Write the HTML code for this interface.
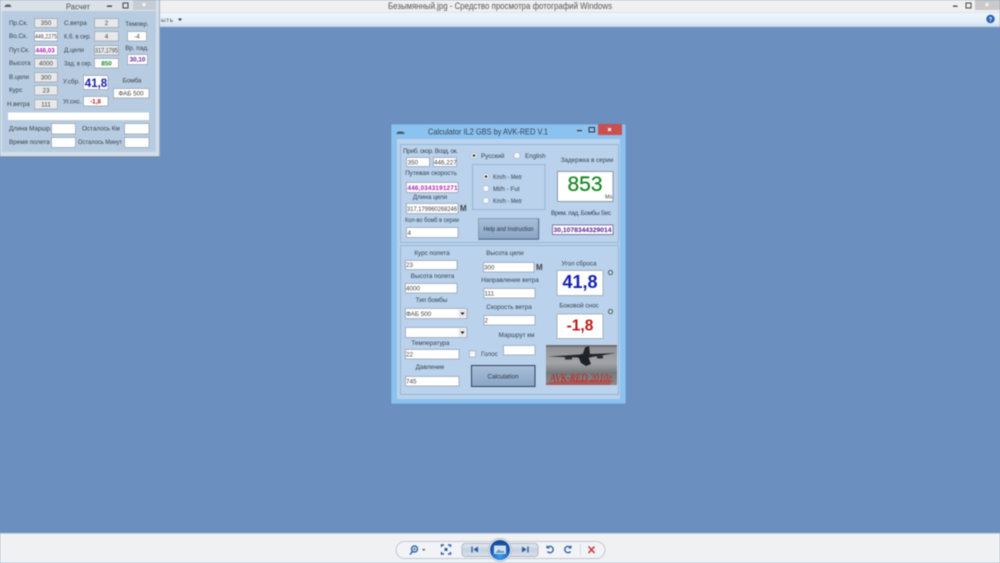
<!DOCTYPE html>
<html><head><meta charset="utf-8"><title>Расчет</title>
<style>
html,body{margin:0;padding:0;width:1000px;height:563px;overflow:hidden;background:#6b90bf}
svg{display:block;filter:blur(.4px)}
text{font-family:"Liberation Sans","Noto Sans CJK SC",sans-serif;font-size:6.3px;fill:#36424e}
.c{text-anchor:middle}
.box{fill:#fff;stroke:#8f9baa;stroke-width:.7}
.gray{fill:#e6e8ea;stroke:#98a0aa;stroke-width:.7}
.v{font-size:6.3px;fill:#444}
.ic{fill:none;stroke:#2f63a8;stroke-width:1.4}
.r{fill:#f6f8fb;stroke:#9aa6b4;stroke-width:.5}
</style></head><body>
<svg width="1000" height="563" viewBox="0 0 1000 563" xmlns="http://www.w3.org/2000/svg">
<defs>
<linearGradient id="tb" x1="0" y1="0" x2="0" y2="1"><stop offset="0" stop-color="#f0f6fc"/><stop offset=".65" stop-color="#e2edf8"/><stop offset="1" stop-color="#cfdeee"/></linearGradient>
<linearGradient id="bt" x1="0" y1="0" x2="0" y2="1"><stop offset="0" stop-color="#e6ebf1"/><stop offset=".5" stop-color="#c6d1df"/><stop offset="1" stop-color="#dde3ea"/></linearGradient>
<linearGradient id="btn" x1="0" y1="0" x2="0" y2="1"><stop offset="0" stop-color="#a9bfd8"/><stop offset="1" stop-color="#89a5c6"/></linearGradient>
<radialGradient id="ctr" cx=".5" cy=".8" r=".75"><stop offset="0" stop-color="#3fa0ee"/><stop offset=".6" stop-color="#1a5fb8"/><stop offset="1" stop-color="#17489a"/></radialGradient>
<linearGradient id="sky" x1="0" y1="0" x2="0" y2="1"><stop offset="0" stop-color="#8f8f92"/><stop offset=".45" stop-color="#a4a5a8"/><stop offset=".7" stop-color="#75787b"/><stop offset="1" stop-color="#8c8a8a"/></linearGradient>
</defs>

<rect width="1000" height="563" fill="#6b90bf"/>
<rect x="0" y="0" width="1000" height="12" fill="#f0f0f0"/>
<rect x="0" y="12" width="1000" height="15" fill="url(#tb)"/>
<rect x="0" y="12" width="1000" height=".7" fill="#d5dce4"/>
<rect x="0" y="26.3" width="1000" height=".8" fill="#b8cbe0"/>
<text x="388" y="9" textLength="224" lengthAdjust="spacingAndGlyphs" style="font-size:9px;fill:#555">Безымянный.jpg - Средство просмотра фотографий Windows</text>
<text x="161" y="22" textLength="12" style="font-size:6.5px;fill:#456">ыть</text>
<path d="M178 18.5h4l-2 2.5z" fill="#334"/>
<rect x="975" y="0" width="25" height="10" fill="#c9c9c9"/>
<path d="M985.5 3l3 3m0-3l-3 3" stroke="#fff" stroke-width="1"/>
<rect x="953" y="5.5" width="4.5" height="1.3" fill="#444"/>
<rect x="966" y="3" width="5" height="5" fill="none" stroke="#444" stroke-width="1"/>
<circle cx="990.5" cy="19" r="4.2" fill="#2a62b0"/><text x="990.5" y="21.5" class="c" style="font-size:6px;font-weight:bold;fill:#fff">?</text>

<!-- bottom bar -->
<rect x="0" y="533" width="1000" height="30" fill="#f0f1f3"/>
<rect x="0" y="533" width="1000" height="1" fill="#cfd6de"/>
<rect x="396" y="541.5" width="209" height="17" rx="8.5" fill="#f1f3f6" stroke="#b4bdc9" stroke-width=".8"/>
<circle cx="414.5" cy="549" r="3" class="ic"/><path d="M412.5 551.5l-2.5 3" class="ic"/><path d="M413 549h3M414.5 547.5v3" stroke="#2f63a8" stroke-width=".7"/>
<path d="M422 549h3.5l-1.75 2z" fill="#556"/>
<path d="M441.5 547v-2h2.5M448 545h2.5v2M441.5 552v2h2.5M448 554h2.5v-2" class="ic" stroke-width="1.1"/>
<rect x="444.5" y="548" width="3" height="3" fill="#2f63a8"/>
<rect x="462" y="543.5" width="76" height="13" rx="3" fill="url(#bt)" stroke="#9aa8ba" stroke-width=".7"/>
<path d="M472 546.5v6" stroke="#2b5da3" stroke-width="1.3"/><path d="M478 546.5v6l-4.5-3z" fill="#2b5da3"/>
<path d="M528 546.5v6" stroke="#2b5da3" stroke-width="1.3"/><path d="M522 546.5v6l4.5-3z" fill="#2b5da3"/>
<circle cx="500" cy="550" r="11.5" fill="#e4ebf3" stroke="#aab6c4" stroke-width=".7"/>
<circle cx="500" cy="550" r="10" fill="url(#ctr)"/>
<rect x="494.5" y="546" width="11" height="7.5" fill="#cfe0ef" stroke="#eaf2fa" stroke-width=".8"/>
<path d="M495 553l4-3.5 2.500 2 1.500-1 2 2.500z" fill="#6d96b8"/>
<path d="M548 547a3.2 3.2 0 1 1-.5 4.5" class="ic"/><path d="M546.5 545v3.5h3.500z" fill="#2f63a8"/>
<path d="M570 547a3.2 3.2 0 1 0 .5 4.5" class="ic"/><path d="M571.5 545v3.5h-3.500z" fill="#2f63a8"/>
<rect x="580" y="544" width=".7" height="12" fill="#cfd5dc"/>
<path d="M588.5 546.5l6 6.5m0-6.5l-6 6.5" stroke="#c9363a" stroke-width="1.5"/>

<!-- Left window -->
<rect x="0" y="0" width="160" height="157" fill="#d4dee9"/>
<rect x="0" y="0" width="160" height="11" fill="#dbe1e8"/>
<rect x="159" y="0" width="1" height="157" fill="#9fb2c8"/>
<rect x="0" y="156.3" width="160" height="1" fill="#6f87a4"/>
<rect x="2" y="11" width="154" height="141" fill="#b8cce1"/>
<path d="M4 7h7.5l-1.5-2.5H6z" fill="#5a6470"/>
<text x="66" y="9.500" textLength="24" lengthAdjust="spacingAndGlyphs" style="font-size:8.5px;fill:#4a5058">Расчет</text>
<rect x="107" y="5.5" width="5" height="1.3" fill="#333"/>
<rect x="123" y="3" width="5" height="5" fill="none" stroke="#444" stroke-width="1"/>
<rect x="133" y="0" width="23" height="10" fill="#c6ccd3"/>
<path d="M142.5 3l3 3m0-3l-3 3" stroke="#fff" stroke-width="1"/>

<text x="9" y="25">Пр.Ск.</text><text x="9" y="38">Во.Ск.</text><text x="9" y="52">Пут.Ск.</text><text x="9" y="65">Высота</text><text x="9" y="79">В.цели</text><text x="9" y="92">Курс</text><text x="7" y="106">Н.ветра</text>
<rect x="34.5" y="18.5" width="23" height="9" class="gray"/><text x="46" y="25.2" class="c v">350</text>
<rect x="34.5" y="31.5" width="23" height="9.5" class="box"/><text x="35" y="38.5" class="v" textLength="22" lengthAdjust="spacingAndGlyphs">446,2275</text>
<rect x="34.5" y="45.5" width="23" height="9.5" class="box"/><text x="35.5" y="52.5" style="font-weight:bold;fill:#b01fb0">446,03</text>
<rect x="34.5" y="58.5" width="23" height="9.5" class="gray"/><text x="46" y="65.5" class="c v">4000</text>
<rect x="34.5" y="72.5" width="23" height="9.5" class="gray"/><text x="46" y="79.5" class="c v">300</text>
<rect x="34.5" y="85.5" width="23" height="9.5" class="gray"/><text x="46" y="92.5" class="c v">23</text>
<rect x="34.5" y="99.5" width="23" height="9.5" class="gray"/><text x="46" y="106.5" class="c v">111</text>

<text x="64" y="25">С.ветра</text><text x="64" y="38.5" textLength="27" lengthAdjust="spacingAndGlyphs">К.б. в сер.</text><text x="64" y="52">Д.цели</text><text x="64" y="65.5" textLength="28" lengthAdjust="spacingAndGlyphs">Зад. в сер.</text>
<rect x="94.5" y="18.5" width="24" height="9" class="gray"/><text x="106.5" y="25.2" class="c v">2</text>
<rect x="94.5" y="31.5" width="24" height="9.5" class="gray"/><text x="106.5" y="38.5" class="c v">4</text>
<rect x="94.5" y="45.5" width="24" height="9.5" class="gray"/><text x="95" y="52.5" class="v" textLength="23" lengthAdjust="spacingAndGlyphs">317,1795</text>
<rect x="94.5" y="58.5" width="24" height="9.5" class="box"/><text x="106.5" y="65.5" class="c" style="font-weight:bold;fill:#1d8a2a">850</text>

<text x="137" y="26" class="c">Темпер.</text>
<rect x="127.5" y="31.5" width="19" height="9.5" class="box"/><text x="137" y="38.5" class="c v">-4</text>
<text x="137" y="50" class="c">Вр. пад.</text>
<rect x="127.5" y="54.5" width="20" height="10" class="box"/><text x="137.5" y="61.5" class="c" style="font-weight:bold;fill:#6a1f9e">30,10</text>

<text x="63" y="83.5">У.сбр.</text>
<rect x="83.5" y="75.5" width="24.5" height="14" class="box"/><text x="96" y="87" class="c" style="font-size:11.5px;font-weight:bold;fill:#1b22a8">41,8</text>
<text x="132" y="82.5" class="c">Бомба</text>
<rect x="113.5" y="88.5" width="35.5" height="9.5" class="box"/><text x="131" y="95.5" class="c v">ФАБ 500</text>
<text x="63" y="103.5">Уг.снс.</text>
<rect x="83.5" y="96.5" width="24.5" height="9.5" class="box"/><text x="95.5" y="103.5" class="c" style="font-weight:bold;fill:#b81c1c">-1,8</text>

<rect x="8" y="112.5" width="141" height="7.5" fill="#fff"/>
<text x="9" y="130.5">Длина Маршр.</text><text x="82" y="130.5">Осталось Км</text>
<text x="9" y="144">Время полета</text><text x="78" y="144" textLength="44" lengthAdjust="spacingAndGlyphs">Осталось Минут</text>
<rect x="51.5" y="123.5" width="24" height="10.5" class="box"/>
<rect x="124.5" y="123.5" width="24.5" height="10.5" class="box"/>
<rect x="51.5" y="137.5" width="24" height="10" class="box"/>
<rect x="124.5" y="137.5" width="24.5" height="10" class="box"/>

<!-- Calculator window -->
<rect x="391" y="124" width="235" height="280" fill="#8cc2f0" stroke="#5f8db8" stroke-width=".6"/>
<rect x="397" y="139" width="223" height="260" fill="#bad2ec"/>
<path d="M396 134h9l-2-2.500h-5z" fill="#4e5a66"/>
<text x="428" y="134.5" textLength="120" lengthAdjust="spacingAndGlyphs" style="font-size:8.3px;fill:#33404e">Calculator IL2 GBS by AVK-RED V.1</text>
<rect x="577" y="130" width="5" height="1.2" fill="#333"/>
<rect x="589" y="127.5" width="5.5" height="4.5" fill="none" stroke="#333" stroke-width="1"/>
<rect x="598" y="124" width="24" height="11" fill="#c9504f"/>
<path d="M608 128l3 3m0-3l-3 3" stroke="#fff" stroke-width="1.1"/>

<rect x="400.5" y="144.5" width="218" height="98" fill="#bad2ec" stroke="#8fb0cf" stroke-width=".8"/>
<rect x="400.5" y="245.5" width="218" height="149" fill="#bad2ec" stroke="#8fb0cf" stroke-width=".8"/>

<text x="403" y="153" textLength="55">Приб. скор. Возд. ок.</text>
<rect x="406.5" y="157.5" width="23" height="9" class="box"/><text x="407.5" y="164.5" class="v">350</text>
<rect x="433.5" y="157.5" width="23" height="9" class="box"/><text x="434" y="164.5" class="v">446,227</text>
<text x="431" y="175" class="c">Путевая скорость</text>
<rect x="406.5" y="182.5" width="51.5" height="10" class="box"/><text x="407.5" y="189.8" textLength="50" style="font-weight:bold;fill:#b01fb0">446,0343191271</text>
<text x="430" y="199" class="c">Длина цели</text>
<rect x="406.5" y="203.5" width="51.5" height="10" class="box"/><text x="407" y="210.8" textLength="50" lengthAdjust="spacingAndGlyphs" class="v">317,179960268246</text>
<text x="460" y="211" style="font-size:8px;font-weight:bold;fill:#444">M</text>
<text x="405" y="222" textLength="54" lengthAdjust="spacingAndGlyphs">Кол-во бомб в серии</text>
<rect x="406.5" y="227.5" width="51.5" height="10" class="box"/><text x="407.5" y="235" class="v">4</text>

<circle cx="474" cy="155.5" r="3" class="r"/><circle cx="474" cy="155.5" r="1.3" fill="#333"/>
<text x="481" y="158">Русский</text>
<circle cx="517" cy="155.5" r="3" class="r"/>
<text x="525" y="158">English</text>

<rect x="472.5" y="164.5" width="72.5" height="45" fill="none" stroke="#8fb0cf" stroke-width=".8"/>
<circle cx="486" cy="176.5" r="3" class="r"/><circle cx="486" cy="176.5" r="1.3" fill="#333"/>
<text x="493" y="179" textLength="29" lengthAdjust="spacingAndGlyphs">Km/h - Metr</text>
<circle cx="486" cy="188.5" r="3" class="r"/>
<text x="493" y="191">Ml/h - Fut</text>
<circle cx="486" cy="200.5" r="3" class="r"/>
<text x="493" y="203" textLength="29" lengthAdjust="spacingAndGlyphs">Km/h - Metr</text>

<text x="587" y="162" class="c">Задержка в серии</text>
<rect x="557.5" y="171.5" width="55.5" height="30" class="box" style="stroke:#6f7782"/>
<text x="585" y="191" class="c" style="font-size:21px;fill:#14871f;stroke:#14871f;stroke-width:.2">853</text>
<text x="605" y="198.5" style="font-size:5.5px">Ms</text>
<text x="551" y="215" textLength="60">Врем. пад. Бомбы Sec</text>
<rect x="552.5" y="225" width="60.5" height="9.5" class="box" style="stroke:#5a4a8a"/>
<text x="553.5" y="232" textLength="58" lengthAdjust="spacingAndGlyphs" style="font-weight:bold;fill:#4f1f8e">30,1078344329014</text>

<rect x="478.5" y="218.5" width="60" height="21" fill="url(#btn)" stroke="#7a8ea6" stroke-width=".7"/>
<rect x="538" y="218.5" width="1.2" height="21" fill="#5d7391"/><rect x="478.5" y="238.5" width="60.5" height="1.2" fill="#5d7391"/>
<text x="508.5" y="231" class="c" textLength="50" lengthAdjust="spacingAndGlyphs" style="fill:#2b3642">Help and Instruction</text>

<text x="432" y="255" class="c">Курс полета</text>
<rect x="405.5" y="260.5" width="51.5" height="9" class="box"/><text x="406" y="267" class="v">23</text>
<text x="432.5" y="278" class="c">Высота полета</text>
<rect x="405.5" y="283.5" width="51.5" height="9.5" class="box"/><text x="406" y="290.5" class="v">4000</text>
<text x="431.5" y="302" class="c">Тип бомбы</text>
<rect x="405.5" y="308.5" width="61.5" height="10" class="box"/><text x="406" y="315.8" class="v">ФАБ 500</text>
<rect x="458.5" y="309.5" width="8" height="8" fill="#e6e8ec"/><path d="M460.5 312.5h4l-2 2.5z" fill="#111"/>
<rect x="405.5" y="327.5" width="61.5" height="10" class="box"/>
<rect x="458.5" y="328.5" width="8" height="8" fill="#e6e8ec"/><path d="M460.5 331.5h4l-2 2.5z" fill="#111"/>
<text x="430.5" y="345" class="c">Температура</text>
<rect x="405.5" y="349.5" width="53.5" height="9.5" class="box"/><text x="406" y="356.5" class="v">22</text>
<text x="430" y="369" class="c">Давление</text>
<rect x="405.5" y="376.5" width="53.5" height="9.5" class="box"/><text x="406" y="383.5" class="v">745</text>

<text x="505" y="255" class="c">Высота цели</text>
<rect x="483.5" y="262.5" width="50.5" height="9.5" class="box"/><text x="484" y="269.5" class="v">300</text>
<text x="536" y="270" style="font-size:8px;font-weight:bold;fill:#444">M</text>
<text x="510" y="282" class="c">Направление ветра</text>
<rect x="484" y="288.5" width="51" height="9.5" class="box"/><text x="484.5" y="295.5" class="v">111</text>
<text x="509" y="309" class="c">Скорость ветра</text>
<rect x="484" y="315.5" width="51" height="9.5" class="box"/><text x="484.5" y="322.5" class="v">2</text>
<text x="516.5" y="337" class="c">Маршрут км</text>
<rect x="503.5" y="345.5" width="31.5" height="9.5" class="box"/>
<rect x="469.5" y="351" width="6" height="6" fill="#f5f7fa" stroke="#8a96a4" stroke-width=".5"/>
<text x="481" y="356">Голос</text>
<rect x="471.5" y="365.5" width="63.5" height="21" fill="url(#btn)" stroke="#2f4258" stroke-width="1"/>
<text x="503" y="378.5" class="c" style="fill:#2b3642">Calculation</text>

<text x="579" y="265.5" class="c">Угол сброса</text>
<rect x="557" y="270.5" width="46" height="25" class="box"/>
<text x="580" y="288" class="c" style="font-size:18px;font-weight:bold;fill:#1420b0">41,8</text>
<text x="610.5" y="275" class="c" style="font-size:7px;fill:#333">O</text>
<text x="579" y="307.5" class="c">Боковой снос</text>
<rect x="557" y="314" width="46" height="24.5" class="box"/>
<text x="580" y="330.5" class="c" style="font-size:15.5px;font-weight:bold;fill:#c01818">-1,8</text>
<text x="610.5" y="314" class="c" style="font-size:7px;fill:#333">O</text>

<!-- image -->
<rect x="546" y="345" width="71" height="40" fill="url(#sky)"/>
<rect x="546" y="345" width="71" height="2" fill="#6e6e72"/>
<path d="M548 356.5l32-2 3-1 2-6 4-1.5 1 8 26-1-24 4-4 1-6 .5-5-1z" fill="#20252b"/>
<path d="M578 356h10l3 8-5 2-5-3z" fill="#1d2228"/>
<rect x="565" y="356.5" width="7" height="3" fill="#2a2f35"/><rect x="597" y="355.5" width="6" height="3" fill="#2a2f35"/>
<path d="M546 383c15-3 40-4 66-2l-2 4h-64z" fill="#b8403c" opacity=".65"/>
<text x="582" y="381.5" class="c" textLength="64" lengthAdjust="spacingAndGlyphs" style="font-family:'Liberation Serif',serif;font-style:italic;font-size:12px;fill:#cf1e1e">AVK-RED 2010г.</text>
</svg>
</body></html>
